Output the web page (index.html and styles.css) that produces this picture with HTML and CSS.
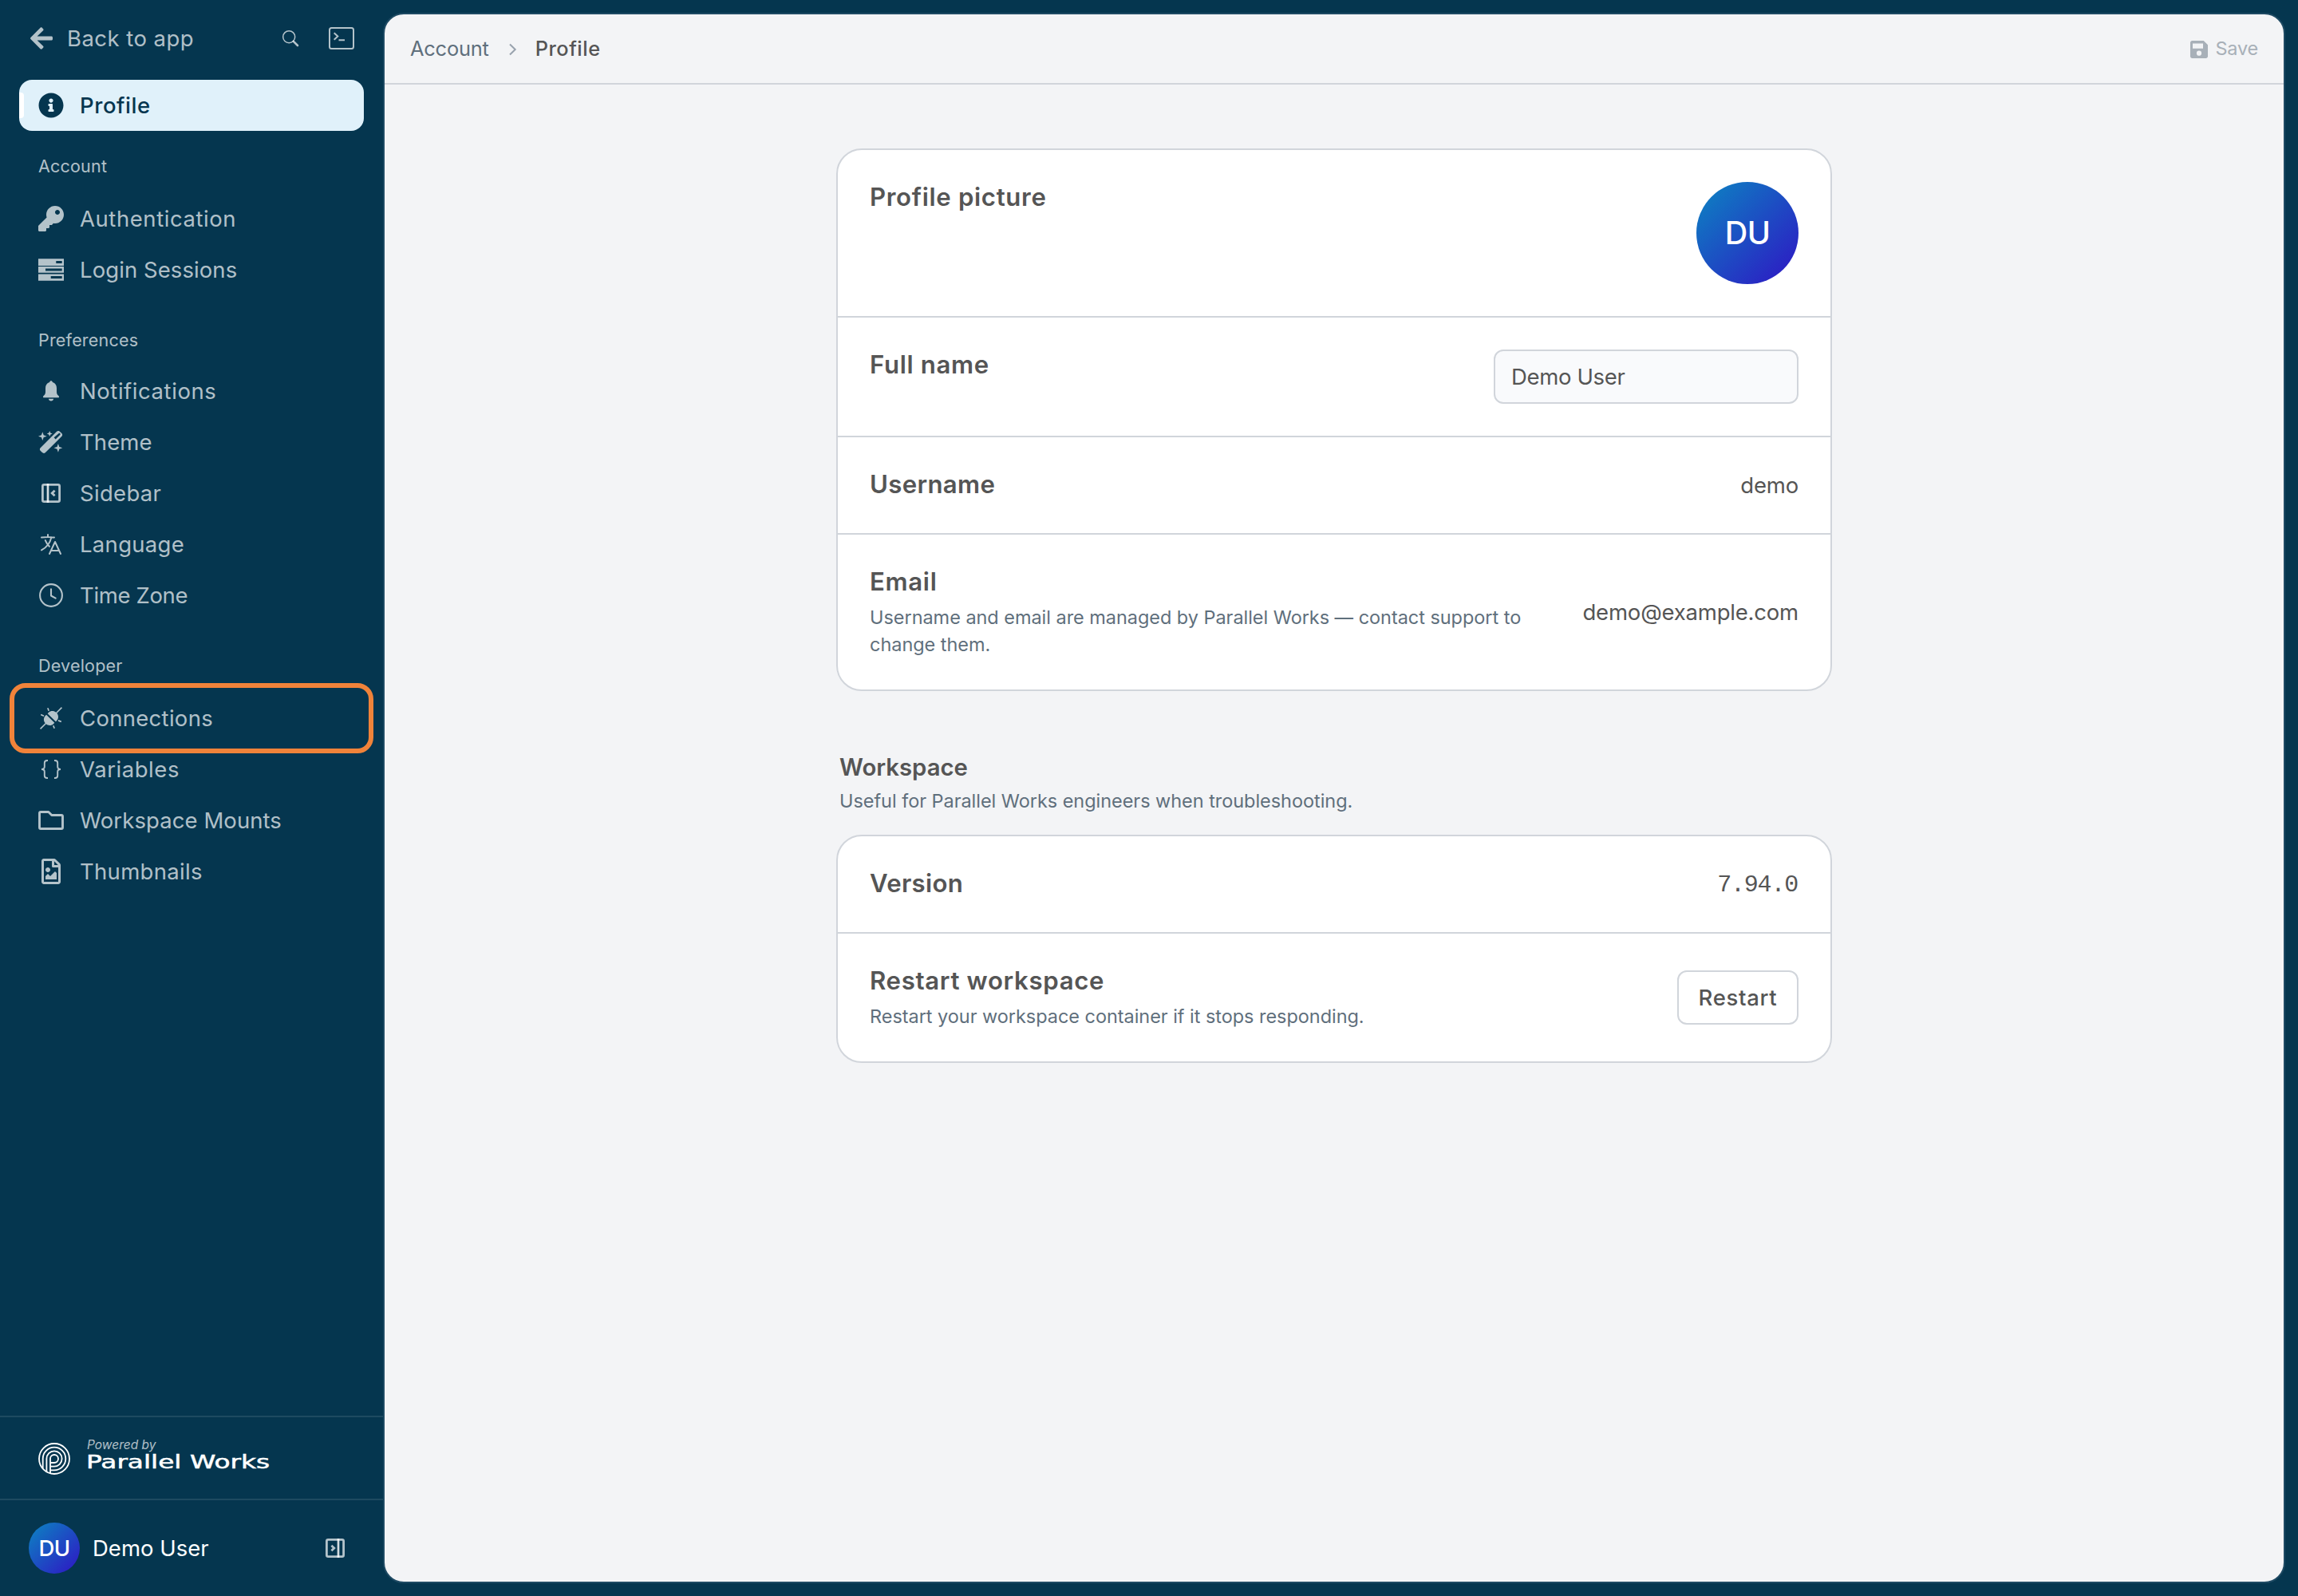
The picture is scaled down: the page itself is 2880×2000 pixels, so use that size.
FILE: index.html
```html
<!DOCTYPE html>
<html lang="en">
<head>
<meta charset="utf-8">
<title>Profile</title>
<link rel="stylesheet" href="styles.css">
</head>
<body>

<div class="app">
  <aside class="sidebar">
    <div class="sidebar-top">
      <a class="back">
        <svg class="back-icon" viewBox="0 0 448 512"><path fill="currentColor" d="M257.5 445.1l-22.2 22.2c-9.4 9.4-24.6 9.4-33.9 0L7 273c-9.4-9.4-9.4-24.6 0-33.9L201.4 44.7c9.4-9.4 24.6-9.4 33.9 0l22.2 22.2c9.5 9.5 9.3 25-.4 34.3L136.6 216H424c13.3 0 24 10.7 24 24v32c0 13.3-10.7 24-24 24H136.6l120.5 114.8c9.8 9.3 10 24.8.4 34.3z"/></svg>
        <span>Back to app</span>
      </a>
      <svg class="search-icon" viewBox="0 0 24 24" fill="none" stroke="currentColor"><circle cx="10.2" cy="10.2" r="7.5" stroke-width="1.5"/><path d="M15.8 15.8l5.2 5.2" stroke-width="2.6" stroke-linecap="round"/></svg>
      <svg class="icon" viewBox="0 0 32 32" fill="none" stroke="currentColor" stroke-width="2"><rect x="1" y="3" width="30" height="26" rx="2.5"/><path d="M6.7 9.2l4.6 4.3-4.6 4.3M12.5 18.2h7.5"/></svg>
    </div>

    <nav class="nav">
      <a class="nav-item active wide">
        <svg class="icon" viewBox="0 0 512 512"><path fill="currentColor" d="M256 8C119.043 8 8 119.083 8 256c0 136.997 111.043 248 248 248s248-111.003 248-248C504 119.083 392.957 8 256 8zm0 110c23.196 0 42 18.804 42 42s-18.804 42-42 42-42-18.804-42-42 18.804-42 42-42zm56 254c0 6.627-5.373 12-12 12h-88c-6.627 0-12-5.373-12-12v-24c0-6.627 5.373-12 12-12h12v-64h-12c-6.627 0-12-5.373-12-12v-24c0-6.627 5.373-12 12-12h64c6.627 0 12 5.373 12 12v100h12c6.627 0 12 5.373 12 12v24z"/></svg>
        <span>Profile</span>
      </a>

      <div class="nav-group">
        <h2 class="nav-label">Account</h2>
        <a class="nav-item wide">
          <svg class="icon" viewBox="0 0 512 512"><path fill="currentColor" d="M512 176.001C512 273.203 433.202 352 336 352c-11.22 0-22.19-1.062-32.827-3.069l-24.012 27.014A23.999 23.999 0 0 1 261.223 384H224v40c0 13.255-10.745 24-24 24h-40v40c0 13.255-10.745 24-24 24H24c-13.255 0-24-10.745-24-24v-78.059c0-6.365 2.529-12.47 7.029-16.971l161.802-161.802C163.108 213.814 160 195.271 160 176 160 78.798 238.797.001 335.999 0 433.488-.001 512 78.511 512 176.001zM336 128c0 26.51 21.49 48 48 48s48-21.49 48-48-21.49-48-48-48-48 21.49-48 48z"/></svg>
          <span>Authentication</span>
        </a>
        <a class="nav-item even">
          <svg class="icon" viewBox="0 0 32 32"><path fill="currentColor" fill-rule="evenodd" d="M0 2.3h32v8.6H0zM22.3 5v3h7.4V5zM0 12h32v7.8H0zM9 14.5v3h20.7v-3zM0 21.4h32v8.4H0zM15.7 24v3h14v-3z"/></svg>
          <span>Login Sessions</span>
        </a>
      </div>

      <div class="nav-group preferences">
        <h2 class="nav-label">Preferences</h2>
        <a class="nav-item wide">
          <svg class="icon" viewBox="0 0 32 32"><path fill="currentColor" d="M16 3.3c-1 0-1.6.7-1.9 1.6C10.8 5.9 9 8.6 9 12.2V17c0 2.4-.8 3.6-2.4 5.1-.4.4-.6.8-.6 1.3 0 .6.4.9 1 .9h18c.6 0 1-.3 1-.9 0-.5-.2-.9-.6-1.3C23.8 20.6 23 19.4 23 17v-4.8c0-3.6-1.8-6.3-5.1-7.3-.3-.9-.9-1.6-1.9-1.6zM12.9 25.7h6.2c-.3 1.8-1.4 2.8-3.1 2.8s-2.8-1-3.1-2.8z"/></svg>
          <span>Notifications</span>
        </a>
        <a class="nav-item even">
          <svg class="icon" viewBox="0 0 32 32" fill="currentColor"><path fill-rule="evenodd" d="M2.7 23.3L22.6 3.2c1.2-1.1 2.7-1.4 3.9-.8l2.6 2.3c1.3 1.2 1.4 2.8.3 4L9 29c-1.3 1.2-2.9 1.2-4.1.1l-2.3-2.3c-1-1.1-1-2.4.1-3.5zM19.6 10.3l2.1 2.1 5.5-5.5c.6-.6.6-1.2.1-1.7s-1.2-.6-1.8 0z"/><path d="M5.3 3.3l1.4 4 4 1.4-4 1.4-1.4 4-1.4-4-4-1.4 4-1.4zM14.2 1.9l1 2.5 2.5 1-2.5 1-1 2.5-1-2.5-2.5-1 2.5-1zM24.9 18l1.4 3.9 4 1.4-4 1.4-1.4 4-1.4-4-4-1.4 4-1.4z"/></svg>
          <span>Theme</span>
        </a>
        <a class="nav-item">
          <svg class="icon" viewBox="0 0 32 32" fill="none" stroke="currentColor" stroke-width="2.8"><rect x="5.4" y="5.4" width="21.2" height="21.2" rx="1.8"/><path d="M12 4v24"/><path stroke-width="1.2" d="M12 4v24"/><path d="M20.6 12.8L17.2 16l3.4 3.3"/></svg>
          <span>Sidebar</span>
        </a>
        <a class="nav-item">
          <svg class="icon" viewBox="0 0 24 24" fill="none" stroke="currentColor" stroke-width="1.5" stroke-linecap="round" stroke-linejoin="round"><path d="M10.5 21l5.25-11.25L21 21m-9-3h7.5M3 5.621a48.474 48.474 0 016-.371m0 0c1.12 0 2.233.038 3.334.114M9 5.25V3m3.334 2.364C11.176 10.658 7.69 15.08 3 17.502m9.334-12.138c.896.061 1.785.147 2.666.257m-4.589 8.495a18.023 18.023 0 01-3.827-5.802"/></svg>
          <span>Language</span>
        </a>
        <a class="nav-item tight">
          <svg class="icon" viewBox="0 0 32 32" fill="none" stroke="currentColor" stroke-width="2.1" stroke-linecap="round" stroke-linejoin="round"><circle cx="16" cy="16" r="13.9"/><path d="M16 8.2v8.3l5.7 3.1"/></svg>
          <span>Time Zone</span>
        </a>
      </div>

      <div class="nav-group developer">
        <h2 class="nav-label">Developer</h2>
        <a class="nav-item highlighted">
          <svg class="icon" viewBox="0 0 32 32"><g transform="rotate(-45 16 16)"><path fill="currentColor" d="M14.9 8.8v14.4h-1.6c-3.9 0-6.6-3-6.9-6.4H-3v-1.6H6.4c.3-3.4 3-6.4 6.9-6.4zM17.1 8.8v14.4h1.6c3.9 0 6.6-3 6.9-6.4H35v-1.6h-9.4c-.3-3.4-3-6.4-6.9-6.4z"/></g><path fill="none" stroke="currentColor" stroke-width="1.7" d="M11.8 3.2l1.4 3.6M3.2 11.5l3.8 1.7M20.2 28.8l-1.4-3.6M28.8 20.4L25 18.9"/></svg>
          <span>Connections</span>
        </a>
        <a class="nav-item wide">
          <svg class="icon" viewBox="0 0 32 32" fill="none" stroke="currentColor" stroke-width="1.9"><path d="M12 5h-.8C8.7 5 7.8 6.1 7.8 8v4.8c0 2-1 3.2-3.8 3.2 2.8 0 3.8 1.2 3.8 3.2V24c0 1.9.9 3 3.4 3h.8M20 5h.8c2.5 0 3.4 1.1 3.4 3v4.8c0 2 1 3.2 3.8 3.2-2.8 0-3.8 1.2-3.8 3.2V24c0 1.9-.9 3-3.4 3H20"/></svg>
          <span>Variables</span>
        </a>
        <a class="nav-item even">
          <svg class="icon" viewBox="0 0 32 32" fill="none" stroke="currentColor" stroke-width="2.9" stroke-linejoin="round"><path d="M3 5.500h9.800l4 4H29c.9 0 1.500.6 1.500 1.500v14c0 .9-.6 1.500-1.500 1.500H3c-.9 0-1.500-.6-1.500-1.500V7c0-.9.6-1.500 1.500-1.500z"/></svg>
          <span>Workspace Mounts</span>
        </a>
        <a class="nav-item">
          <svg class="icon" viewBox="0 0 384 512"><path fill="currentColor" d="M369.9 97.9L286 14C277 5 264.800-.1 252.100-.1H48C21.500 0 0 21.500 0 48v416c0 26.500 21.500 48 48 48h288c26.500 0 48-21.500 48-48V131.900c0-12.700-5.100-25-14.100-34zM332.100 128H256V51.900l76.100 76.100zM48 464V48h160v104c0 13.300 10.700 24 24 24h104v288H48zm32-48h224V288l-23.500-23.500c-4.700-4.700-12.300-4.700-17 0L176 352l-39.500-39.500c-4.700-4.700-12.300-4.700-17 0L80 352v64zm48-240c-26.500 0-48 21.500-48 48s21.500 48 48 48 48-21.500 48-48-21.500-48-48-48z"/></svg>
          <span>Thumbnails</span>
        </a>
      </div>
    </nav>

    <div class="powered">
      <svg class="logo" viewBox="0 0 40 40" fill="none" stroke="#fff" stroke-width="1.8">
        <circle cx="20" cy="20" r="19"/>
        <path d="M5.7 32.5V20a14.3 14.3 0 1 1 14.3 14.3h-5"/>
        <path d="M10.4 36V20a9.6 9.6 0 1 1 9.6 9.6h-5"/>
        <path d="M15 38V20a5 5 0 1 1 5 5h-5"/>
      </svg>
      <div class="powered-text">
        <span class="powered-by">Powered by</span>
        <svg class="wordmark" viewBox="0 0 230 24"><text x="-1" y="20" textLength="230" lengthAdjust="spacingAndGlyphs">Parallel Works</text></svg>
      </div>
    </div>

    <div class="user">
      <div class="avatar">DU</div>
      <span class="user-name">Demo User</span>
      <svg class="icon" viewBox="0 0 32 32" fill="none" stroke="currentColor" stroke-width="2.8"><rect x="5.4" y="5.4" width="21.2" height="21.2" rx="1.8"/><path d="M20 4v24"/><path stroke-width="1.2" d="M20 4v24"/><path d="M11.400 12.800l3.400 3.200-3.400 3.300"/></svg>
    </div>
  </aside>

  <main class="panel">
    <header class="panel-header">
      <div class="breadcrumb">
        <span>Account</span>
        <svg class="chevron" viewBox="0 0 12 18" fill="none" stroke="currentColor" stroke-width="2"><path d="M2 2.5L8.700 9 2 15.500"/></svg>
        <span class="current">Profile</span>
      </div>
      <div class="save">
        <svg class="save-icon" viewBox="0 0 22 22"><path fill="currentColor" fill-rule="evenodd" d="M2.500 0h14.200L22 5.300v14.200c0 1.400-1.100 2.500-2.500 2.500h-17C1.100 22 0 20.900 0 19.500v-17C0 1.100 1.100 0 2.500 0zM3 3.500v6.200h13V3.500zM11 12.600a3.100 3.100 0 1 0 0 6.200 3.100 3.100 0 0 0 0-6.200z"/></svg>
        <span>Save</span>
      </div>
    </header>

    <div class="content">
      <section class="card">
        <div class="row top">
          <h3 class="title">Profile picture</h3>
          <div class="avatar avatar-lg">DU</div>
        </div>
        <div class="row top">
          <h3 class="title">Full name</h3>
          <input class="input" type="text" value="Demo User">
        </div>
        <div class="row">
          <h3 class="title title-tight">Username</h3>
          <span class="value">demo</span>
        </div>
        <div class="row">
          <div class="row-text">
            <h3 class="title">Email</h3>
            <p class="desc">Username and email are managed by Parallel Works — contact support to change them.</p>
          </div>
          <span class="value">demo@example.com</span>
        </div>
      </section>

      <div class="section-head">
        <h2 class="section-title">Workspace</h2>
        <p class="desc">Useful for Parallel Works engineers when troubleshooting.</p>
      </div>

      <section class="card">
        <div class="row">
          <h3 class="title title-tight">Version</h3>
          <span class="value mono">7.94.0</span>
        </div>
        <div class="row">
          <div class="row-text">
            <h3 class="title">Restart workspace</h3>
            <p class="desc">Restart your workspace container if it stops responding.</p>
          </div>
          <button class="button">Restart</button>
        </div>
      </section>
    </div>
  </main>
</div>

</body>
</html>
```
FILE: styles.css
```css
*, *:before, *:after {
  box-sizing: border-box;
}

body {
  margin: 0;
  background: #05364f;
  font: 27.5px/1.2 Inter, sans-serif;
  color: #555;
}

h2, h3, p {
  margin: 0;
}

svg {
  display: block;
  flex: none;
}

.app {
  display: flex;
  width: 2880px;
  height: 2000px;
  padding: 16px 16px 16px 0;
}

/* sidebar */
.sidebar {
  display: flex;
  flex-direction: column;
  width: 480px;
  margin: -16px 0;
  color: rgba(255, 255, 255, 0.7);
}

.sidebar-top {
  display: flex;
  align-items: center;
  height: 100px;
  padding: 0 36px 4px 38px;
}

.back {
  display: flex;
  align-items: center;
  gap: 18px;
  flex: 1;
  letter-spacing: 0.45px;
}

.back-icon {
  width: 28px;
  height: 32px;
}

.search-icon {
  width: 24px;
  height: 24px;
  margin-right: 36px;
}

.icon {
  width: 32px;
  height: 32px;
}

.nav {
  flex: 1;
  padding: 0 24px;
}

.nav-group {
  padding-top: 28px;
}
.nav-group.preferences,
.nav-group.developer {
  padding-top: 40px;
}

.nav-label {
  margin-bottom: 18px;
  padding-left: 24px;
  font-size: 21.5px;
  font-weight: 400;
  line-height: 32px;
  letter-spacing: 0.2px;
}
.preferences .nav-label {
  margin-bottom: 16px;
}

.nav-item {
  display: flex;
  position: relative;
  align-items: center;
  gap: 20px;
  height: 64px;
  padding-left: 24px;
  letter-spacing: 0.3px;
}
.nav-item.wide {
  letter-spacing: 0.56px;
}
.nav-item.even {
  letter-spacing: 0.08px;
}
.nav-item.tight {
  letter-spacing: -0.35px;
}
.nav-item.active {
  border-radius: 16px;
  background: #e0f1fa;
  color: #05364f;
  font-weight: 500;
}
.nav-item.active:before {
  content: "";
  position: absolute;
  left: 0;
  top: 16px;
  width: 6px;
  height: 32px;
  border-radius: 0 4px 4px 0;
  background: #fff;
}
/* ring around the item, overlaps its neighbours */
.nav-item.highlighted:after {
  content: "";
  position: absolute;
  inset: -12px;
  border: 6px solid #f0833a;
  border-radius: 20px;
}

.powered {
  display: flex;
  align-items: center;
  gap: 21px;
  height: 104px;
  padding: 2px 48px 0;
  border-top: 2px solid rgba(255, 255, 255, 0.1);
}

.logo {
  width: 40px;
  height: 40px;
}

.powered-text {
  margin-top: -12px;
}

.powered-by {
  display: block;
  height: 19px;
  font-size: 15.5px;
  font-style: italic;
  line-height: 19px;
}

.wordmark {
  width: 230px;
  height: 24px;
  overflow: visible;
}
.wordmark text {
  font: 23px "DejaVu Sans", sans-serif;
  fill: #fff;
  stroke: #fff;
  stroke-width: 0.5px;
}

.user {
  display: flex;
  align-items: center;
  gap: 16px;
  height: 122px;
  padding: 0 44px 0 36px;
  border-top: 2px solid rgba(255, 255, 255, 0.1);
}

.avatar {
  display: flex;
  align-items: center;
  justify-content: center;
  width: 64px;
  height: 64px;
  border-radius: 50%;
  background: linear-gradient(135deg, #0b86c2, #2f14c4);
  color: #fff;
  font-weight: 500;
  letter-spacing: -0.5px;
}
.avatar-lg {
  width: 128px;
  height: 128px;
  padding-top: 2px;
  font-size: 39.5px;
}

.user-name {
  flex: 1;
  color: #fff;
}

/* panel */
.panel {
  flex: 1;
  border: 2px solid #1e4a63;
  border-radius: 26px;
  background: #f3f4f6;
  overflow: hidden;
}

.panel-header {
  display: flex;
  align-items: center;
  justify-content: space-between;
  height: 88px;
  padding: 0 32px;
  border-bottom: 2px solid #d1d5db;
}

.breadcrumb {
  display: flex;
  align-items: center;
  color: #5f6f7c;
  font-size: 25.4px;
  letter-spacing: -0.2px;
}

.chevron {
  width: 12px;
  height: 18px;
  margin: 2px 22px 0 24px;
  color: #98a2ad;
}

.current {
  color: #555;
  font-weight: 500;
  letter-spacing: 0.5px;
}

.save {
  display: flex;
  align-items: center;
  gap: 9px;
  color: #a8b0b8;
  font-size: 23.5px;
  letter-spacing: -0.2px;
}

.save-icon {
  width: 22px;
  height: 22px;
  margin-top: 2px;
}

.content {
  width: 1248px;
  margin: 0 auto;
  padding-top: 80px;
}

.card {
  border: 2px solid #d1d5db;
  border-radius: 32px;
  background: #fff;
}

.row {
  display: flex;
  align-items: center;
  justify-content: space-between;
  gap: 48px;
  padding: 40px;
}
.row + .row {
  border-top: 2px solid #d1d5db;
}
.row.top {
  align-items: flex-start;
}

.title {
  min-height: 40px;
  font-size: 31.2px;
  font-weight: 600;
  line-height: 38px;
  letter-spacing: 0.65px;
}
.title-tight {
  letter-spacing: 0.3px;
}
.row-text .title {
  min-height: 0;
  margin-bottom: 9px;
}
.row-text {
  margin-bottom: -1px;
}

.desc {
  color: #5f6f7c;
  font-size: 23.5px;
  line-height: 34px;
  letter-spacing: -0.045px;
}

.value {
  letter-spacing: -0.2px;
}
.value.mono {
  padding: 2px 1px 0 0;
  font: 30px/36px "Liberation Mono", monospace;
  letter-spacing: -1.2px;
}

.input {
  width: 382px;
  height: 68px;
  padding: 0 20px;
  border: 2px solid #d1d5db;
  border-radius: 12px;
  background: #f9fafc;
  color: #555;
  font: inherit;
  letter-spacing: -0.35px;
}

.section-head {
  padding: 77px 4px 25px;
}

.section-title {
  margin-bottom: 6px;
  font-size: 29.3px;
  font-weight: 600;
  line-height: 38px;
}

.button {
  flex: none;
  width: 152px;
  height: 68px;
  padding: 0;
  border: 2px solid #d1d5db;
  border-radius: 12px;
  background: #fff;
  color: #555;
  font: inherit;
  font-weight: 500;
  letter-spacing: 0.7px;
}
```
